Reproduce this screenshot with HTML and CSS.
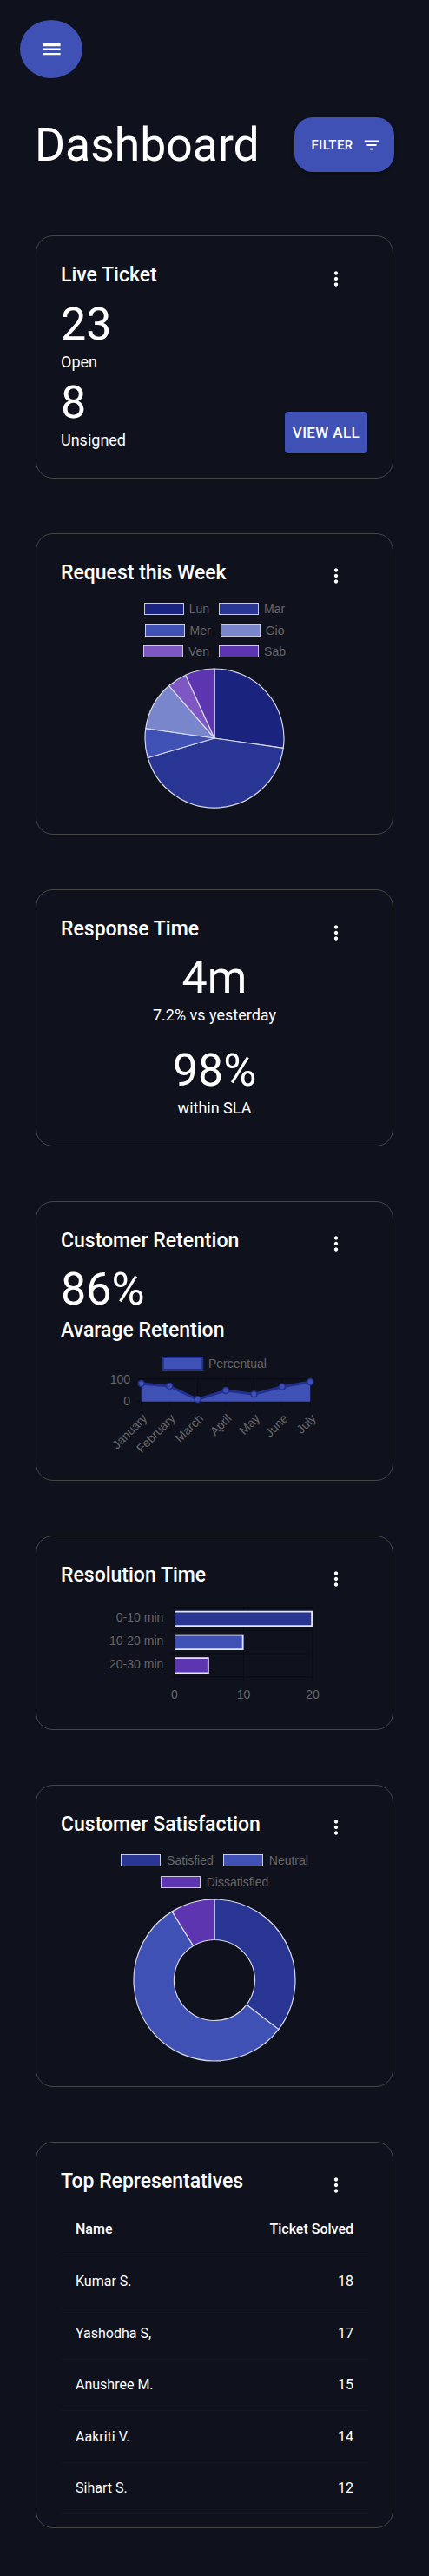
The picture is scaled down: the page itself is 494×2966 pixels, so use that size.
FILE: index.html
```html
<!DOCTYPE html>
<html lang="en">
<head>
<meta charset="utf-8">
<title>Dashboard</title>
<link rel="stylesheet" href="styles.css">
</head>
<body>
<header class="topbar">
  <button class="menu-btn" aria-label="menu">
    <svg viewBox="0 0 24 24" width="27" height="27"><path d="M3 18h18v-2H3v2zm0-5h18v-2H3v2zm0-6v2h18V6H3z" fill="#fff"/></svg>
  </button>
</header>

<div class="title-row">
  <h1 class="page-title">Dashboard</h1>
  <button class="filter-btn">FILTER
    <svg viewBox="0 0 24 24" width="22" height="22"><path d="M10 18h4v-2h-4v2zM3 6v2h18V6H3zm3 7h12v-2H6v2z" fill="#fff"/></svg>
  </button>
</div>

<main class="cards">

  <section class="card">
    <div class="card-header">
      <h2 class="card-title">Live Ticket</h2>
      <svg class="kebab" viewBox="0 0 24 24"><path d="M12 8c1.1 0 2-.9 2-2s-.9-2-2-2-2 .9-2 2 .9 2 2 2zm0 2c-1.1 0-2 .9-2 2s.9 2 2 2 2-.9 2-2-.9-2-2-2zm0 6c-1.1 0-2 .9-2 2s.9 2 2 2 2-.9 2-2-.9-2-2-2z"/></svg>
    </div>
    <div class="live-body">
      <div class="stats">
        <div class="stat">
          <div class="stat-value">23</div>
          <div class="stat-label">Open</div>
        </div>
        <div class="stat">
          <div class="stat-value">8</div>
          <div class="stat-label">Unsigned</div>
        </div>
      </div>
      <button class="view-all">VIEW ALL</button>
    </div>
  </section>

  <section class="card">
    <div class="card-header">
      <h2 class="card-title">Request this Week</h2>
      <svg class="kebab" viewBox="0 0 24 24"><path d="M12 8c1.1 0 2-.9 2-2s-.9-2-2-2-2 .9-2 2 .9 2 2 2zm0 2c-1.1 0-2 .9-2 2s.9 2 2 2 2-.9 2-2-.9-2-2-2zm0 6c-1.1 0-2 .9-2 2s.9 2 2 2 2-.9 2-2-.9-2-2-2z"/></svg>
    </div>
    <div class="legend">
      <div class="legend-row">
        <span class="legend-item"><i class="swatch c-lun"></i>Lun</span>
        <span class="legend-item"><i class="swatch c-mar"></i>Mar</span>
      </div>
      <div class="legend-row">
        <span class="legend-item"><i class="swatch c-mer"></i>Mer</span>
        <span class="legend-item"><i class="swatch c-gio"></i>Gio</span>
      </div>
      <div class="legend-row">
        <span class="legend-item"><i class="swatch c-ven"></i>Ven</span>
        <span class="legend-item"><i class="swatch c-sab"></i>Sab</span>
      </div>
    </div>
    <svg class="pie" width="164" height="164" viewBox="-1 -1 164 164">
      <g stroke="#d6d8e6" stroke-width="1.2" stroke-linejoin="round">
        <path fill="#1a237e" d="M81 81 L81 1 A80 80 0 0 1 160.19 92.38 Z"/>
        <path fill="#283593" d="M81 81 L160.19 92.38 A80 80 0 0 1 4.24 103.54 Z"/>
        <path fill="#3f51b5" d="M81 81 L4.24 103.54 A80 80 0 0 1 1.81 69.62 Z"/>
        <path fill="#7986cb" d="M81 81 L1.81 69.62 A80 80 0 0 1 28.61 20.54 Z"/>
        <path fill="#7e57c2" d="M81 81 L28.61 20.54 A80 80 0 0 1 47.77 8.23 Z"/>
        <path fill="#5e35b1" d="M81 81 L47.77 8.23 A80 80 0 0 1 81 1 Z"/>
      </g>
    </svg>
  </section>

  <section class="card">
    <div class="card-header">
      <h2 class="card-title">Response Time</h2>
      <svg class="kebab" viewBox="0 0 24 24"><path d="M12 8c1.1 0 2-.9 2-2s-.9-2-2-2-2 .9-2 2 .9 2 2 2zm0 2c-1.1 0-2 .9-2 2s.9 2 2 2 2-.9 2-2-.9-2-2-2zm0 6c-1.1 0-2 .9-2 2s.9 2 2 2 2-.9 2-2-.9-2-2-2z"/></svg>
    </div>
    <div class="metrics">
      <div class="metric">
        <div class="metric-value">4m</div>
        <div class="metric-label">7.2% vs yesterday</div>
      </div>
      <div class="metric">
        <div class="metric-value">98%</div>
        <div class="metric-label">within SLA</div>
      </div>
    </div>
  </section>

  <section class="card">
    <div class="card-header">
      <h2 class="card-title">Customer Retention</h2>
      <svg class="kebab" viewBox="0 0 24 24"><path d="M12 8c1.1 0 2-.9 2-2s-.9-2-2-2-2 .9-2 2 .9 2 2 2zm0 2c-1.1 0-2 .9-2 2s.9 2 2 2 2-.9 2-2-.9-2-2-2zm0 6c-1.1 0-2 .9-2 2s.9 2 2 2 2-.9 2-2-.9-2-2-2z"/></svg>
    </div>
    <div class="stat-value">86%</div>
    <div class="subtitle">Avarage Retention</div>
    <svg class="line-chart" width="354" height="119" viewBox="0 0 354 119">
      <g class="grid">
        <line x1="92.7" y1="30.7" x2="92.7" y2="61"/>
        <line x1="125.1" y1="30.7" x2="125.1" y2="61"/>
        <line x1="157.6" y1="30.7" x2="157.6" y2="61"/>
        <line x1="190" y1="30.7" x2="190" y2="61"/>
        <line x1="222.4" y1="30.7" x2="222.4" y2="61"/>
        <line x1="254.9" y1="30.7" x2="254.9" y2="61"/>
        <line x1="287.3" y1="30.7" x2="287.3" y2="61"/>
        <line x1="88" y1="30.7" x2="287.3" y2="30.7"/>
        <line x1="88" y1="56.7" x2="287.3" y2="56.7"/>
      </g>
      <rect x="117.7" y="6" width="45.6" height="14" fill="#3f51b5" stroke="#232f8e" stroke-width="2"/>
      <text class="chart-text" x="170" y="17.5">Percentual</text>
      <text class="chart-text" x="80" y="35.5" text-anchor="end">100</text>
      <text class="chart-text" x="80" y="61" text-anchor="end">0</text>
      <polygon fill="#3f51b5" points="92.7,36 125.1,39 157.6,54.3 190,44 222.4,48.3 254.9,39.7 287.3,34 287.3,56.7 92.7,56.7"/>
      <polyline fill="none" stroke="#232f8e" stroke-width="3" stroke-linejoin="round" points="92.7,36 125.1,39 157.6,54.3 190,44 222.4,48.3 254.9,39.7 287.3,34"/>
      <g fill="#3f51b5" stroke="#232f8e" stroke-width="1.5">
        <circle cx="92.7" cy="36" r="3.5"/>
        <circle cx="125.1" cy="39" r="3.5"/>
        <circle cx="157.6" cy="54.3" r="3.5"/>
        <circle cx="190" cy="44" r="3.5"/>
        <circle cx="222.4" cy="48.3" r="3.5"/>
        <circle cx="254.9" cy="39.7" r="3.5"/>
        <circle cx="287.3" cy="34" r="3.5"/>
      </g>
      <g class="chart-text" text-anchor="end">
        <text transform="translate(100.2 77) rotate(-45)">January</text>
        <text transform="translate(132.6 77) rotate(-45)">February</text>
        <text transform="translate(165.1 77) rotate(-45)">March</text>
        <text transform="translate(197.5 77) rotate(-45)">April</text>
        <text transform="translate(229.9 77) rotate(-45)">May</text>
        <text transform="translate(262.4 77) rotate(-45)">June</text>
        <text transform="translate(294.8 77) rotate(-45)">July</text>
      </g>
    </svg>
  </section>

  <section class="card">
    <div class="card-header">
      <h2 class="card-title">Resolution Time</h2>
      <svg class="kebab" viewBox="0 0 24 24"><path d="M12 8c1.1 0 2-.9 2-2s-.9-2-2-2-2 .9-2 2 .9 2 2 2zm0 2c-1.1 0-2 .9-2 2s.9 2 2 2 2-.9 2-2-.9-2-2-2zm0 6c-1.1 0-2 .9-2 2s.9 2 2 2 2-.9 2-2-.9-2-2-2z"/></svg>
    </div>
    <svg class="bar-chart" width="354" height="123" viewBox="0 0 354 123">
      <g class="grid">
        <line x1="131" y1="10.7" x2="131" y2="95"/>
        <line x1="210.5" y1="10.7" x2="210.5" y2="95"/>
        <line x1="290" y1="10.7" x2="290" y2="95"/>
        <line x1="126" y1="10.7" x2="290" y2="10.7"/>
        <line x1="126" y1="37.3" x2="290" y2="37.3"/>
        <line x1="126" y1="64" x2="290" y2="64"/>
        <line x1="126" y1="90.7" x2="290" y2="90.7"/>
      </g>
      <rect x="131" y="14.7" width="159" height="18.3" fill="#283593"/>
      <rect x="131" y="41.7" width="79.5" height="18.3" fill="#3f51b5"/>
      <rect x="131" y="68.3" width="39.7" height="19" fill="#5e35b1"/>
      <g fill="none" stroke="#e4e4ee" stroke-width="1.8">
        <path d="M131 15.6 H289.1 V32.1 H131"/>
        <path d="M131 42.6 H209.6 V59.1 H131"/>
        <path d="M131 69.2 H169.8 V86.4 H131"/>
      </g>
      <g class="chart-text" text-anchor="end">
        <text x="118.3" y="27">0-10 min</text>
        <text x="118.3" y="54">10-20 min</text>
        <text x="118.3" y="81.3">20-30 min</text>
      </g>
      <g class="chart-text" text-anchor="middle">
        <text x="131" y="116">0</text>
        <text x="210.5" y="116">10</text>
        <text x="290" y="116">20</text>
      </g>
    </svg>
  </section>

  <section class="card">
    <div class="card-header">
      <h2 class="card-title">Customer Satisfaction</h2>
      <svg class="kebab" viewBox="0 0 24 24"><path d="M12 8c1.1 0 2-.9 2-2s-.9-2-2-2-2 .9-2 2 .9 2 2 2zm0 2c-1.1 0-2 .9-2 2s.9 2 2 2 2-.9 2-2-.9-2-2-2zm0 6c-1.1 0-2 .9-2 2s.9 2 2 2 2-.9 2-2-.9-2-2-2z"/></svg>
    </div>
    <div class="legend legend--wide">
      <div class="legend-row">
        <span class="legend-item"><i class="swatch c-mar"></i>Satisfied</span>
        <span class="legend-item"><i class="swatch c-mer"></i>Neutral</span>
      </div>
      <div class="legend-row">
        <span class="legend-item"><i class="swatch c-sab"></i>Dissatisfied</span>
      </div>
    </div>
    <svg class="donut" width="188" height="188" viewBox="0 0 188 188">
      <g stroke="#d6d8e6" stroke-width="1.2" stroke-linejoin="round">
        <path fill="#283593" d="M94 1 A93 93 0 0 1 167.78 150.61 L130.89 122.31 A46.5 46.5 0 0 0 94 47.5 Z"/>
        <path fill="#3f51b5" d="M167.78 150.61 A93 93 0 1 1 45.13 14.87 L69.57 54.44 A46.5 46.5 0 1 0 130.89 122.31 Z"/>
        <path fill="#5e35b1" d="M45.13 14.87 A93 93 0 0 1 94 1 L94 47.5 A46.5 46.5 0 0 0 69.57 54.44 Z"/>
      </g>
    </svg>
  </section>

  <section class="card card--table">
    <div class="card-header">
      <h2 class="card-title">Top Representatives</h2>
      <svg class="kebab" viewBox="0 0 24 24"><path d="M12 8c1.1 0 2-.9 2-2s-.9-2-2-2-2 .9-2 2 .9 2 2 2zm0 2c-1.1 0-2 .9-2 2s.9 2 2 2 2-.9 2-2-.9-2-2-2zm0 6c-1.1 0-2 .9-2 2s.9 2 2 2 2-.9 2-2-.9-2-2-2z"/></svg>
    </div>
    <table class="reps">
      <thead>
        <tr><th>Name</th><th class="num">Ticket Solved</th></tr>
      </thead>
      <tbody>
        <tr><td>Kumar S.</td><td class="num">18</td></tr>
        <tr><td>Yashodha S,</td><td class="num">17</td></tr>
        <tr><td>Anushree M.</td><td class="num">15</td></tr>
        <tr><td>Aakriti V.</td><td class="num">14</td></tr>
        <tr><td>Sihart S.</td><td class="num">12</td></tr>
      </tbody>
    </table>
  </section>

</main>
</body>
</html>
```

FILE: styles.css
```css
* {
  box-sizing: border-box;
}

html,
body {
  margin: 0;
  padding: 0;
}

body {
  background: #0f121d;
  color: #fff;
  font-family: Roboto, "Noto Sans", "Liberation Sans", sans-serif;
}

button {
  font-family: inherit;
  cursor: pointer;
}

/* ---------- top bar ---------- */
.topbar {
  padding: 23px 0 0 23px;
}

.menu-btn {
  width: 72px;
  height: 67px;
  border: 0;
  border-radius: 50%;
  background: #3f51b5;
  display: flex;
  align-items: center;
  justify-content: center;
  padding: 0;
}

.title-row {
  display: flex;
  align-items: center;
  justify-content: space-between;
  height: 63px;
  margin: 45px 0 73px;
  padding: 0 40px 0 40px;
}

.page-title {
  margin: 0;
  font-size: 53.5px;
  font-weight: 400;
  line-height: 63px;
}

.filter-btn {
  width: 115px;
  height: 63px;
  border: 0;
  border-radius: 21px;
  background: #3f51b5;
  color: #fff;
  font-size: 15px;
  font-weight: 500;
  letter-spacing: 0.4px;
  display: flex;
  align-items: center;
  justify-content: center;
  gap: 10px;
  padding: 0 12px 0 16px;
  box-shadow: 0 3px 4px rgba(0, 0, 0, 0.3);
}

/* ---------- cards ---------- */
.card {
  margin: 0 41px 63px;
  padding: 29px 28px 28px;
  border: 1px solid #454545;
  border-radius: 20px;
}

.card--table {
  padding-bottom: 15px;
}

.card-header {
  display: flex;
  align-items: flex-start;
  justify-content: space-between;
  margin-bottom: 9px;
}

.card-title {
  margin: 0;
  font-size: 23px;
  font-weight: 500;
  line-height: 32px;
}

.kebab {
  width: 26px;
  height: 26px;
  margin: 6.5px 24px 0 0;
  fill: #fff;
  flex: none;
}

/* live ticket */
.live-body {
  display: flex;
  align-items: flex-end;
  justify-content: space-between;
}

.stats {
  padding-bottom: 3px;
}

.stat + .stat {
  margin-top: 4px;
}

.stat-value {
  font-size: 52px;
  font-weight: 400;
  line-height: 62px;
}

.stat-label {
  font-size: 18px;
  line-height: 24px;
}

.view-all {
  width: 95px;
  height: 48px;
  margin-right: 1px;
  border: 0;
  border-radius: 4px;
  background: #3f51b5;
  color: #fff;
  font-size: 17px;
  font-weight: 500;
  letter-spacing: 0.4px;
  padding: 0;
  box-shadow: 0 2px 3px rgba(0, 0, 0, 0.3);
}

/* response time */
.metrics {
  padding: 1px 0 3px;
  text-align: center;
}

.metric + .metric {
  margin-top: 23px;
}

.metric-value {
  font-size: 52px;
  line-height: 58px;
}

.metric-label {
  margin-top: 2px;
  font-size: 18px;
  line-height: 24px;
}

/* retention */
.subtitle {
  font-size: 23px;
  font-weight: 500;
  line-height: 32px;
}

.line-chart {
  display: block;
  margin-top: 9px;
}

.grid line {
  stroke: #090b13;
  stroke-width: 1;
}

.chart-text {
  font-family: "Liberation Sans", Arial, sans-serif;
  font-size: 14px;
  fill: #666;
}

.bar-chart {
  display: block;
}

/* legends */
.legend {
  display: flex;
  flex-direction: column;
  align-items: center;
  gap: 10.5px;
  margin-top: 18px;
}

.legend--wide {
  gap: 11px;
}

.legend-row {
  display: flex;
  gap: 11px;
}

.legend-item {
  display: flex;
  align-items: center;
  gap: 6px;
  font-family: "Liberation Sans", Arial, sans-serif;
  font-size: 14px;
  line-height: 14px;
  color: #666;
}

.legend--wide .legend-item {
  gap: 7px;
}

.swatch {
  display: block;
  width: 46px;
  height: 14px;
  border: 1.5px solid #c9cbd9;
}

.c-lun { background: #1a237e; }
.c-mar { background: #283593; }
.c-mer { background: #3f51b5; }
.c-gio { background: #7986cb; }
.c-ven { background: #7e57c2; }
.c-sab { background: #5e35b1; }

.pie {
  display: block;
  margin: 11px auto 0;
}

.donut {
  display: block;
  margin: 12px auto 0;
}

/* table */
.reps {
  width: 100%;
  border-collapse: collapse;
  font-size: 16px;
}

.reps th,
.reps td {
  padding: 17.2px 17px;
  line-height: 24px;
  text-align: left;
  border-bottom: 1px solid #151823;
}

.reps th {
  font-weight: 500;
  padding-bottom: 18.5px;
}

.reps .num {
  text-align: right;
}
```
